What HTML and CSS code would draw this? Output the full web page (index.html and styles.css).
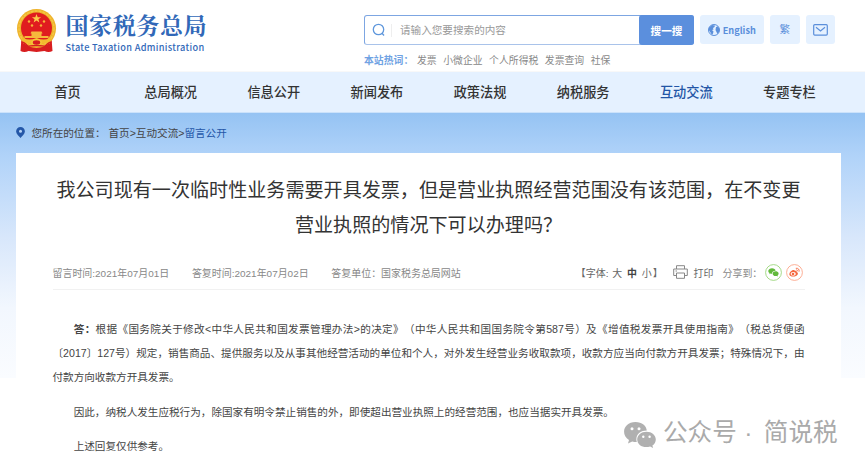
FILE: index.html
```
<!DOCTYPE html>
<html lang="zh-CN">
  <head>
    <meta charset="UTF-8" />
    <meta name="viewport" content="width=device-width, initial-scale=1.0" />
    <title>国家税务总局 - 留言公开</title>
    <link rel="stylesheet" href="styles.css">
  </head>
  <body>
    <header class="header">
      <a class="logo" href="#">
        <svg class="emblem" viewBox="0 0 40 44" aria-hidden="true">
          <path d="M5 29 4 42q4 2 8 0l8 1 8-1q4 2 8 0l-1-13z" fill="#d81e20"/>
          <circle cx="20" cy="19.500" r="19.500" fill="#eeb32b"/>
          <circle cx="20" cy="19.500" r="17.500" fill="none" stroke="#f5c544" stroke-width="1.500" stroke-dasharray="3 1"/>
          <circle cx="20" cy="19" r="15.500" fill="#e01c1f"/>
          <path d="m20 5 1.200 3.200h3.400l-2.700 2 1 3.300-2.900-2-2.900 2 1-3.300-2.700-2h3.400z" fill="#fbc94a"/>
          <g fill="#f8b33a"><circle cx="12.500" cy="12.500" r="1.200"/><circle cx="27.500" cy="12.500" r="1.200"/><circle cx="15.500" cy="16.500" r="1.200"/><circle cx="24.500" cy="16.500" r="1.200"/></g>
          <path d="M15 22.500h10l1 2h-1V27h7v2H8v-2h7v-2.500h-1z" fill="#f6b83c"/>
          <path d="M6 29q7 3 14 0 7 3 14 0l-1 6q-5-2-8 0-5 3-10 0-3-2-8 0z" fill="#f3bb2f"/>
          <ellipse cx="20" cy="33.500" rx="4.500" ry="3" fill="#d81e20" stroke="#f6c83c" stroke-width="1.500"/>
          <path d="M5 33q5 1 7 6M35 33q-5 1-7 6M8 38q12-3 24 0" fill="none" stroke="#d81e20" stroke-width="1.500"/>
        </svg>
        <span class="logo-text">
          <span class="logo-cn">国家税务总局</span>
          <span class="logo-en">State Taxation Administration</span>
        </span>
      </a>

      <div class="tools">
        <div class="tools-row">
          <form class="search">
            <svg class="search-icon" viewBox="0 0 14 14"><circle cx="6.500" cy="6.500" r="5.200"/><path d="m9.800 10 2.200 2.500"/></svg>
            <span class="placeholder">请输入您要搜索的内容</span>
            <button class="search-btn" type="button">搜一搜</button>
          </form>
          <a class="tool tool-en" href="#">
            <svg viewBox="0 0 12 12"><circle cx="6" cy="6" r="5.500" fill="none" stroke="#5b8fdb"/><path d="M1 3.500 4 1l3 .5-.5 1.500L5 4l.5 1.500L4 6l1.500 1.500L5 9.500 4 11 2.500 8.500.800 6zM8 3l2-.5 1.500 2.500-.5 3-1.500 2L8.500 8l-1-2z" fill="#5b8fdb"/></svg>
            English
          </a>
          <a class="tool tool-tw" href="#">繁</a>
          <a class="tool tool-mail" href="#">
            <svg viewBox="0 0 15 12"><rect x=".7" y=".7" width="13.600" height="10.400" rx="1"/><path d="m3 3.300 4.500 3.700L12 3.300"/></svg>
          </a>
        </div>
        <div class="hot"><b>本站热词：</b><a>发票</a><a>小微企业</a><a>个人所得税</a><a>发票查询</a><a>社保</a></div>
      </div>
    </header>

    <nav class="nav">
      <a>首页</a><a>总局概况</a><a>信息公开</a><a>新闻发布</a><a>政策法规</a><a>纳税服务</a><a class="active">互动交流</a><a>专题专栏</a>
    </nav>

    <main class="main">
      <div class="crumb">
        <svg viewBox="0 0 9 11"><path d="M4.500 0a4.400 4.400 0 0 1 4.400 4.400C8.900 7 6 9 4.500 11 3 9 .1 7 .1 4.400A4.400 4.400 0 0 1 4.500 0z" fill="#2457a8"/><circle cx="4.500" cy="4.300" r="1.500" fill="#b5d3f6"/></svg>
        <span class="crumb-label">您所在的位置：</span>
        <span>首页&gt;互动交流&gt;<a>留言公开</a></span>
      </div>

      <article class="card">
        <h1>我公司现有一次临时性业务需要开具发票，但是营业执照经营范围没有该范围，在不变更<br>营业执照的情况下可以办理吗？</h1>

        <div class="meta">
          <span class="meta-item">留言时间:2021年07月01日</span>
          <span class="meta-item">答复时间:2021年07月02日</span>
          <span class="meta-item">答复单位：国家税务总局网站</span>
          <span class="font-size">【字体: <a>大</a> <b>中</b> <a>小</a>】</span>
          <span class="print">
            <svg viewBox="0 0 15 14"><path d="M3.500 4V.7h8V4M3.500 10.500H.7V4h13.600v6.500h-2.800M3.500 8h8v5.300h-8zM2.500 6h1.500"/></svg>
            打印
          </span>
          <span class="share">分享到：</span>
          <svg class="share-icon" viewBox="0 0 17 17"><circle cx="8.500" cy="8.500" r="7.900" fill="#fff" stroke="#8fd06c" stroke-width=".8"/><path d="M7 4.200c2 0 3.500 1.200 3.600 2.600-2-.1-3.700 1.200-3.500 3-.6 0-1 0-1.500-.2L4.300 10.300l.3-1.200C2 7.500 3.600 4.200 7 4.200zM10.500 7.200c3 0 4.200 2.800 2.100 4.200l.3 1.100-1.200-.6c-2.500.5-4.200-.8-4-2.500.2-1.300 1.400-2.200 2.800-2.200z" fill="#62b93c"/></svg>
          <svg class="share-icon" viewBox="0 0 17 17"><circle cx="8.500" cy="8.500" r="7.900" fill="#fff" stroke="#fb9b7b" stroke-width=".8"/><path d="M7.300 6c.9-.3 1.600 0 1.400 1 1.200-.4 2.300-.2 1.900 1 3 1.200.5 4.600-3.200 4.600-4.800 0-5-3.300-2.400-5.400C5.900 6.400 6.700 6 7.300 6z" fill="#f5683f"/><ellipse cx="7.200" cy="9.900" rx="2.600" ry="1.800" fill="#fff"/><circle cx="7" cy="10" r="1.300" fill="#f5683f"/><path d="M9.800 4.300c2.300-.5 3.900 1.200 3.200 3.400M10.200 5.900c1-.2 1.600.4 1.400 1.300" fill="none" stroke="#f5683f" stroke-width=".9"/></svg>
        </div>

        <div class="content">
          <p>
            <span class="line first"><b>答：</b>根据《国务院关于修改&lt;中华人民共和国发票管理办法&gt;的决定》（中华人民共和国国务院令第587号）及《增值税发票开具使用指南》（税总货便函</span>
            <span class="line">〔2017〕127号）规定，销售商品、提供服务以及从事其他经营活动的单位和个人，对外发生经营业务收取款项，收款方应当向付款方开具发票；特殊情况下，由</span>
            <span class="line last">付款方向收款方开具发票。</span>
          </p>
          <p><span class="line first last">因此，纳税人发生应税行为，除国家有明令禁止销售的外，即使超出营业执照上的经营范围，也应当据实开具发票。</span></p>
          <p><span class="line first last">上述回复仅供参考。</span></p>
        </div>
      </article>
    </main>

    <div class="watermark">
      <svg viewBox="0 0 32 26"><path d="M11.500 0C18 0 22.500 4 22.800 8.600 17 8.600 12 12 12.400 18c.1 1 .2 1.500.5 2-1.500.1-3-.1-4.700-.6L4 21.600l1-3.600C-4 12 0 0 11.500 0z" fill="#b0b0b0"/><path d="M22.500 9.700c5.300 0 9.300 3.500 9.300 7.700 0 2.500-1.300 4.700-3.400 6.200l.7 2.400-3-1.500c-7 2-12.900-1.700-12.900-7.100 0-4.200 4-7.700 9.300-7.700z" fill="#b0b0b0"/><g fill="#fff"><circle cx="8" cy="6.700" r="1.500"/><circle cx="15" cy="6.700" r="1.500"/><circle cx="19.300" cy="14.800" r="1.200"/><circle cx="25.600" cy="14.800" r="1.200"/></g></svg>
      <span>公众号</span><span class="dot">·</span><span>简说税</span>
    </div>
  </body>
</html>
```
FILE: styles.css
```
/* ---------- Reset & Base ---------- */
*{box-sizing:border-box;margin:0;padding:0;}
html,body{height:469px;overflow:hidden;}
body{position:relative;background:#fff;color:#444;font-family:"Liberation Sans","Noto Sans CJK SC",sans-serif;font-size:10.6px;text-spacing-trim:space-all;white-space:nowrap;}
a{color:inherit;text-decoration:none;}
svg{display:block;flex:none;}

/* ---------- Header ---------- */
.header{display:flex;height:72px;border-bottom:1px solid #f8f8f8;}
.logo{display:flex;width:364px;padding:9px 0 0 16px;color:#3168b8;}
.emblem{width:41px;height:44px;}
.logo-text{display:flex;flex-direction:column;padding-left:8.500px;}
.logo-cn{font-family:"Noto Serif CJK SC","Noto Sans CJK SC",serif;font-size:23px;font-weight:700;line-height:32px;letter-spacing:.6px;}
.logo-en{font-family:"Noto Sans CJK SC",sans-serif;font-size:9.200px;font-weight:500;line-height:12px;letter-spacing:.32px;}

.tools{padding-top:15px;}
.tools-row{display:flex;}
.search{display:flex;align-items:center;width:330px;height:30px;border:1px solid #7da6e2;border-bottom-color:#a9c3ea;border-radius:3px;}
.search-icon{width:14px;height:14px;margin:0 5px 0 7px;fill:none;stroke:#5f97dc;stroke-width:1.300;}
.placeholder{flex:1;padding-left:8px;border-left:1px solid #eee;line-height:13px;color:#999;}
.search-btn{width:55px;height:30px;margin-right:-1px;border:0;border-radius:3px;background:#5b8fdd;color:#fff;font:700 10.600px "Noto Sans CJK SC",sans-serif;}
.tool{display:flex;align-items:center;justify-content:center;height:29px;margin-left:6px;border-radius:3px;background:#e5f1ff;color:#5b8fdb;}
.tool-en{width:64.500px;gap:3px;margin-left:5.500px;font-family:"Noto Sans CJK SC",sans-serif;font-size:9.200px;font-weight:700;}
.tool-en svg{width:12px;height:12px;}
.tool-tw{width:29.500px;padding-bottom:2px;font-size:10.600px;}
.tool-mail{width:29.500px;}
.tool-mail svg{width:15px;height:12px;fill:none;stroke:#5b8fdb;stroke-width:1.200;}
.hot{display:flex;margin-top:8px;font-size:9.850px;line-height:15px;color:#888;}
.hot b{width:53px;color:#6fa2e3;}
.hot a{margin-right:6.500px;}

/* ---------- Nav ---------- */
.nav{display:flex;height:41px;padding:1px 24px 0 16px;background:#e5f1ff;border-bottom:1px solid #cbe2fb;}
.nav a{flex:1;text-align:center;font-size:13.200px;font-weight:500;line-height:40px;color:#333;}
.nav .active{color:#2355a6;}

/* ---------- Content ---------- */
.main{height:356px;padding:0 24px 0 16px;background:linear-gradient(#95c3f3 0,#b1d3f9 44px,#d8e7fb 125px,#f2f7fe 195px,#fafcff 265px,#fff 265px);}
.crumb{display:flex;align-items:center;height:40px;padding-bottom:2px;color:#444;}
.crumb svg{width:9px;height:11px;margin-right:6.500px;}
.crumb-label{width:77px;}
.crumb a{color:#2457a8;}
.card{height:316px;padding:20px 36.500px 0;background:#fff;}
h1{font-size:19.080px;font-weight:400;line-height:35px;text-align:center;color:#333;margin:0 -10px;}
.meta{display:flex;align-items:center;height:35px;margin-top:12px;border-bottom:1px solid #f1f1f1;font-size:9.960px;color:#888;}
.meta-item{margin-right:22.700px;}
.font-size{margin-left:auto;color:#666;}
.font-size b,.font-size a{margin:0 1px;}
.font-size b{color:#444;}
.print{display:flex;align-items:center;gap:6px;margin-left:10px;color:#666;}
.print svg{width:15px;height:14px;fill:none;stroke:#888;stroke-width:1;}
.share{width:42px;margin-left:9px;}
.share-icon{width:17px;height:17px;margin-right:4px;}
.share-icon:last-child{margin-right:2px;}

.content{padding-top:27px;font-size:10.600px;line-height:24px;color:#444;}
.content p{margin-bottom:10.500px;}
.line{display:block;text-align:justify;text-align-last:justify;white-space:normal;height:24px;}
.first{padding-left:21.200px;}
.last{text-align-last:left;}

/* ---------- Watermark ---------- */
.watermark{position:absolute;left:624px;top:417px;display:flex;align-items:center;height:34px;font-size:24.600px;line-height:34px;color:#aaa;}
.watermark svg{width:32px;height:26px;margin:2px 7px 0 0;}
.watermark span{margin-top:-2px;}
.watermark .dot{width:27px;padding-right:4px;text-align:center;}
```
